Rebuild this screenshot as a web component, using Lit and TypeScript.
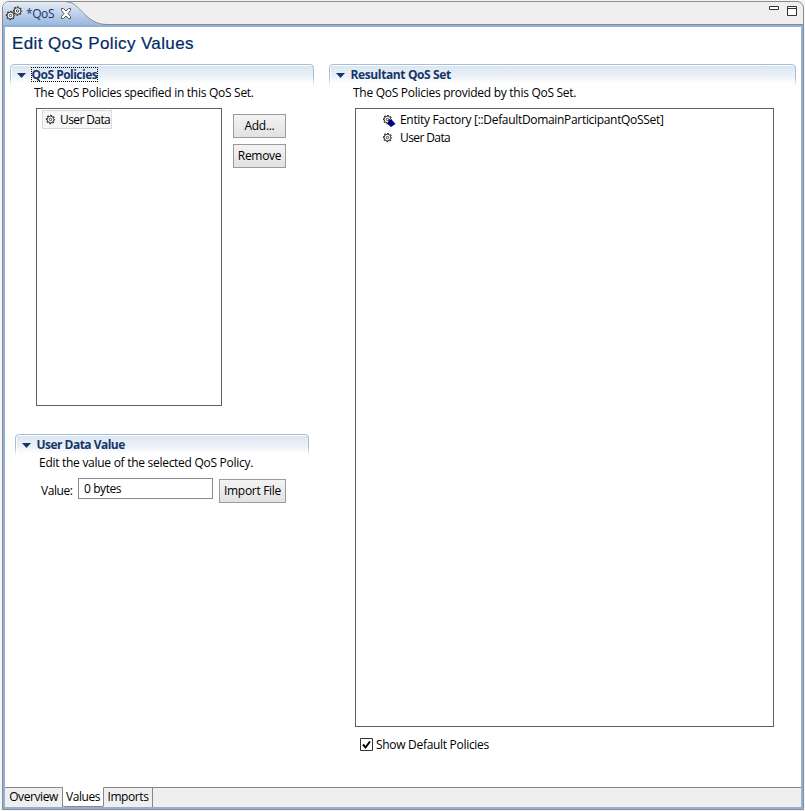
import { LitElement, html, css, svg } from "lit";
import { customElement, property } from "lit/decorators.js";

const gearShape = svg`<circle cx="4.5" cy="4.5" r="4" fill="none" stroke="#333" stroke-width="1.300" stroke-dasharray="1.900 1.240" stroke-dashoffset=".95"/><circle cx="4.5" cy="4.5" r="3.300" fill="#fff" stroke="#333" stroke-width=".9"/><circle cx="4.5" cy="4.500" r="1.200" fill="#fff" stroke="#333" stroke-width=".9"/>`;

@customElement("form-section")
export class FormSection extends LitElement {
  @property() heading = "";
  @property({ type: Boolean }) focused = false;
  static styles = css`
    :host { display: block; }
    .bar { height: 22px; box-sizing: border-box;
      border: 1px solid #a3bddb; border-bottom: 0; border-radius: 4px 4px 0 0;
      background: linear-gradient(#dce6f1, #f7f9fc 17px, #fff 17px) 1px 1px no-repeat;
      -webkit-mask: linear-gradient(#000 60%, transparent); }
    .twist { width: 9px; height: 5px; }
    .head { display: flex; align-items: center; height: 22px; padding-left: 6.5px; margin-top: -22px; position: relative; }
    .label { margin: -1px 0 0 5px; font-weight: bold; color: #14366b; height: 15px; line-height: 13px; white-space: nowrap; box-sizing: border-box; border: 1px solid transparent; letter-spacing: var(--head-track, -0.52px); }
    .focused { border: 1px dotted #000; }
  `;
  render() {
    return html`<div class="bar"></div>
      <div class="head">
        <svg class="twist" viewBox="0 0 9 5"><path d="M0 0h9L4.5 5z" fill="#14366b"/></svg>
        <span class="label ${this.focused ? "focused" : ""}">${this.heading}</span>
      </div><slot></slot>`;
  }
}

@customElement("app-root")
export class AppRoot extends LitElement {
  static styles = css`
    :host { display: block; width: 805px; height: 811px; box-sizing: border-box; padding: 1px 1px 1px 2px; background: #f4f4f4;
      font: 12px "Open Sans", "Noto Sans", sans-serif; color: #000; letter-spacing: -0.42px; overflow: hidden; }
    * { box-sizing: border-box; }
    .window { height: 809px; width: 802px; border: 1px solid #8c8c8c; border-radius: 7px 7px 0 0; display: flex; flex-direction: column; background: #efefef; overflow: hidden; }
    .top { height: 23px; flex: none; display: flex; justify-content: space-between; position: relative; border-bottom: 1px solid #8c8c8c; }
    .tabshape { position: absolute; left: 0; top: 0; width: 104px; height: 23px; }
    .tab { position: relative; display: flex; align-items: center; height: 22px; padding-left: 2px; color: #14366b; }
    .gears { width: 18px; height: 16px; }
    .tabname { margin-left: 3px; width: 31px; }
    .close { width: 12px; height: 11px; margin-left: 3px; }
    .winbtns { display: flex; padding: 2px 5px 0 0; gap: 7px; align-items: flex-start; }
    .winbtns svg { display: block; }
    .body { flex: 1; min-height: 0; border: 2px solid #8fb1d9; display: flex; flex-direction: column; background: #fff; }
    .page { flex: 1; min-height: 0; padding: 6px 5px 0 5px; }
    h1 { margin: 0 0 9px 2px; height: 22px; font: 17px/22px "Liberation Sans", Arial, sans-serif; letter-spacing: 0.38px; color: #002a66; -webkit-text-stroke: 0.2px #002a66; white-space: nowrap; }
    .cols { display: grid; grid-template-columns: 304px 467px; column-gap: 15px; }
    .desc { margin: -1px 0 8px 24px; height: 15px; line-height: 16px; white-space: nowrap; letter-spacing: -0.28px; }
    .row { display: flex; }
    .list { border: 1px solid #5a6070; }
    .small { width: 186px; height: 298px; margin-left: 26px; padding: 1px 0 0 5px; }
    .large { width: 419px; height: 619px; margin-left: 26px; padding: 1px 0 0 27px; }
    .buttons { display: flex; flex-direction: column; gap: 6px; margin: 6px 0 0 11px; }
    .btn { height: 24px; width: 53px; border: 1px solid #9b9b9b; background: linear-gradient(#f3f3f3, #e2e2e2); text-align: center; line-height: 22px; white-space: nowrap; letter-spacing: -0.3px; }
    .selected { width: 70px; height: 19px; border: 1px solid #dadada; background: #f7f7f7; display: flex; align-items: center; padding-left: 2px; white-space: nowrap; letter-spacing: -0.6px; }
    .item { display: flex; align-items: center; height: 18px; white-space: nowrap; letter-spacing: -0.32px; }
    .item span { margin: 0 0 0 4px; }
    .tight { letter-spacing: -0.6px; }
    .gear { width: 13px; height: 13px; flex: none; margin-top: 4px; }
    .selected .gear { margin-top: 1px; }
    .selected span { margin: -1px 0 0 2px; }
    .value { width: 294px; margin: 28px 0 0 5px; }
    .wide { --head-track: -0.38px; }
    .field { display: flex; margin-left: 26px; }
    .field label { width: 37px; padding-top: 5px; line-height: 15px; }
    .input { width: 135px; height: 21px; border: 1px solid #8a8a92; padding-left: 5px; line-height: 19px; }
    .import { width: 67px; margin: 1px 0 0 6px; }
    .check { display: flex; align-items: center; height: 15px; margin: 10px 0 0 31px; letter-spacing: -0.3px; }
    .check svg { width: 13px; height: 13px; margin-right: 3px; }
    .pages { height: 20px; flex: none; display: flex; background: #efefef; }
    .pages div { height: 20px; line-height: 17px; border-top: 1px solid #888; border-right: 1px solid #888; text-align: center; }
    .pages .on { border-top-color: #fff; background: #fff; border-bottom: 1px solid #888; border-radius: 0 0 2px 2px; }
    .overview { width: 58px; }
    .values { width: 41px; }
    .imports { width: 49px; }
    .pages .rest { flex: 1; border-right: 0; }
  `;
  render() {
    return html`<div class="window">
      <div class="top">
        <svg class="tabshape" viewBox="0 0 104 23"><defs><linearGradient id="g" x2="0" y2="1"><stop offset="0" stop-color="#e4ecf6"/><stop offset="1" stop-color="#99b8de"/></linearGradient></defs>
          <path d="M0 0H64C77 0 82 22.5 104 22.5V23H0Z" fill="url(#g)"/><path d="M64 0C77 0 82 22.5 104 22.5" fill="none" stroke="#8c8c8c"/></svg>
        <div class="tab">
          <svg class="gears" viewBox="0 0 18 16"><g transform="translate(1 6)">${gearShape}</g><g transform="translate(8 1.5)">${gearShape}</g></svg>
          <span class="tabname">*QoS</span>
          <svg class="close" viewBox="0 0 12 11"><path d="M1.5 .5h2L6 3 8.5.5h2v2L8 5.5l2.5 3v2h-2L6 8l-2.500 2.500h-2v-2L4 5.500l-2.500-3z" fill="#fff" stroke="#555"/></svg>
        </div>
        <div class="winbtns">
          <svg width="11" height="6" viewBox="0 0 11 6"><path d="M.5 2.500h9v3h-9z" fill="#fff" stroke="#333"/></svg>
          <svg width="11" height="12" viewBox="0 0 11 12"><path d="M.5 2.500h9v9h-9zM.5 4.500h9" fill="#fff" stroke="#333"/></svg>
        </div>
      </div>
      <div class="body">
        <div class="page">
          <h1>Edit QoS Policy Values</h1>
          <div class="cols">
            <div>
              <form-section heading="QoS Policies" focused>
                <p class="desc">The QoS Policies specified in this QoS Set.</p>
                <div class="row">
                  <div class="list small"><div class="selected"><svg class="gear" viewBox="0 0 13 13"><g transform="translate(1 1)">${gearShape}</g></svg><span>User Data</span></div></div>
                  <div class="buttons"><div class="btn">Add...</div><div class="btn">Remove</div></div>
                </div>
              </form-section>
              <form-section class="value" heading="User Data Value">
                <p class="desc">Edit the value of the selected QoS Policy.</p>
                <div class="field"><label>Value:</label><div class="input">0 bytes</div><div class="btn import">Import File</div></div>
              </form-section>
            </div>
            <form-section class="wide" heading="Resultant QoS Set">
              <p class="desc">The QoS Policies provided by this QoS Set.</p>
              <div class="list large">
                <div class="item"><svg class="gear" viewBox="0 0 13 13">${gearShape}<path d="M6 4l2 1 1 0 3.500 4-4.500 3-3.500-3z" fill="#000080"/></svg><span>Entity Factory [::DefaultDomainParticipantQoSSet]</span></div>
                <div class="item tight"><svg class="gear" viewBox="0 0 13 13">${gearShape}</svg><span>User Data</span></div>
              </div>
              <div class="check"><svg viewBox="0 0 13 13"><path d="M.5.500h12v12H.5z" fill="#fff" stroke="#333"/><path d="M3 6.500l2.500 3L10 3.500" fill="none" stroke="#000" stroke-width="2"/></svg><span>Show Default Policies</span></div>
            </form-section>
          </div>
        </div>
        <div class="pages"><div class="overview">Overview</div><div class="on values">Values</div><div class="imports">Imports</div><div class="rest"></div></div>
      </div>
    </div>`;
  }
}
